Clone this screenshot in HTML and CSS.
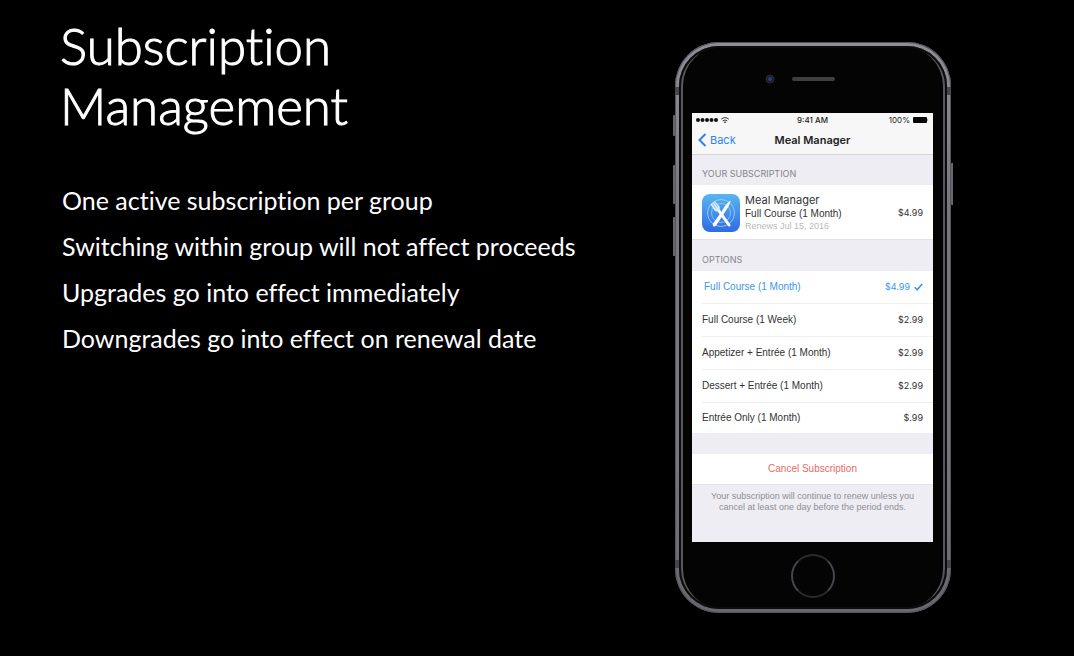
FILE: index.html
```html
<!DOCTYPE html>
<html lang="en">
<head>
<meta charset="utf-8">
<title>Subscription Management</title>
<link rel="stylesheet" href="styles.css">
</head>
<body>
<main class="slide">
  <section class="copy">
    <h1 class="title">Subscription<br>Management</h1>
    <ul class="points">
      <li>One active subscription per group</li>
      <li>Switching within group will not affect proceeds</li>
      <li>Upgrades go into effect immediately</li>
      <li>Downgrades go into effect on renewal date</li>
    </ul>
  </section>

  <section class="phone" aria-label="Phone">
    <span class="key key-mute"></span>
    <span class="key key-up"></span>
    <span class="key key-down"></span>
    <span class="key key-power"></span>
    <span class="band band-top"></span>
    <span class="band band-bottom"></span>
    <div class="face">
      <div class="forehead">
        <svg class="sensors" width="160" height="14" viewBox="0 0 160 14" aria-hidden="true">
          <circle cx="37" cy="7" r="4" fill="#1c1d27" stroke="#2b2b30"/>
          <circle cx="37" cy="7" r="2" fill="#273f80"/>
          <rect x="59" y="5" width="43" height="4" rx="2" fill="#3f3e40"/>
        </svg>
      </div>
      <div class="screen">
        <div class="status">
          <span class="signal">
            <svg width="34" height="8" viewBox="0 0 34 8" aria-hidden="true">
              <g fill="#111"><circle cx="2" cy="4" r="2"/><circle cx="6.500" cy="4" r="2"/><circle cx="11" cy="4" r="2"/><circle cx="15.500" cy="4" r="2"/><circle cx="20" cy="4" r="2"/></g>
              <g fill="none" stroke="#222" stroke-width=".9"><path d="M25.200 3.200Q29 0 32.800 3.200"/><path d="M26.700 4.900Q29 3 31.300 4.900" /></g>
              <path d="M27.800 6L29 7.300 30.200 6Q29 5 27.800 6Z" fill="#222"/>
            </svg>
          </span>
          <span class="clock">9:41 AM</span>
          <span class="power">100%
            <svg width="16" height="6" viewBox="0 0 16 6" aria-hidden="true"><rect width="14" height="6" rx="1" fill="#050505"/><path d="M14.500 1.800q1.400 1.200 0 2.400z" fill="#050505"/></svg>
          </span>
        </div>
        <div class="navbar">
          <button class="back" type="button">
            <svg width="9" height="14" viewBox="0 0 9 14" aria-hidden="true"><path d="M7.500 1L1.500 7l6 6" fill="none" stroke="#2f83f0" stroke-width="2"/></svg>
            Back
          </button>
          <h2 class="heading">Meal Manager</h2>
        </div>
        <h3 class="label">YOUR SUBSCRIPTION</h3>
        <div class="current">
          <svg class="app-icon" width="38" height="38" viewBox="0 0 38 38" aria-hidden="true">
            <defs><linearGradient id="sky" x1="0" y1="0" x2="0" y2="1"><stop offset="0" stop-color="#5ab6ef"/><stop offset="1" stop-color="#2e6be4"/></linearGradient></defs>
            <rect width="38" height="38" rx="8" fill="url(#sky)"/>
            <circle cx="19" cy="19" r="13.500" fill="none" stroke="#a9d3f7" stroke-width=".8"/>
            <circle cx="19" cy="19" r="9.500" fill="none" stroke="#a9d3f7" stroke-width=".7"/>
            <path d="M15 14L27 31" stroke="#fff" stroke-width="3" stroke-linecap="round"/>
            <path d="M8.500 10.500L13 7l4.500 5.500q1 3-1 4.500t-4-.5z" fill="#d9ecfc"/>
            <path d="M10 9.500l4 5M11.800 8l4 5" stroke="#63a9ee" stroke-width=".7"/>
            <path d="M29 6.500Q24 9 20 17L11 29.500q-1 2 .5 2.800t2.800-1L22 19.500Q27 13 29 6.500Z" fill="#fff"/>
          </svg>
          <div class="plan">
            <span class="plan-app">Meal Manager</span>
            <span class="plan-name">Full Course (1 Month)</span>
            <span class="plan-date">Renews Jul 15, 2016</span>
          </div>
          <span class="price">$4.99</span>
        </div>
        <h3 class="label label-options">OPTIONS</h3>
        <div class="options">
          <button class="option option-on" type="button"><span>Full Course (1 Month)</span><span class="price">$4.99
            <svg width="9" height="8" viewBox="0 0 9 8" aria-hidden="true"><path d="M.8 4.300L3.200 6.700 8.200 1" fill="none" stroke="#3290e8" stroke-width="1.600"/></svg></span></button>
          <button class="option" type="button"><span>Full Course (1 Week)</span><span class="price">$2.99</span></button>
          <button class="option" type="button"><span>Appetizer + Entrée (1 Month)</span><span class="price">$2.99</span></button>
          <button class="option" type="button"><span>Dessert + Entrée (1 Month)</span><span class="price">$2.99</span></button>
          <button class="option" type="button"><span>Entrée Only (1 Month)</span><span class="price">$.99</span></button>
        </div>
        <button class="cancel" type="button">Cancel Subscription</button>
        <p class="note">Your subscription will continue to renew unless you cancel at least one day before the period ends.</p>
      </div>
      <div class="chin"><button class="home" type="button" aria-label="Home"></button></div>
    </div>
  </section>
</main>
</body>
</html>
```
FILE: styles.css
```css
* {
  box-sizing: border-box;
}

body {
  margin: 0;
  min-height: 100vh;
  background: #000;
  color: #fff;
  font-family: Inter, "Liberation Sans", sans-serif;
}

button {
  margin: 0;
  padding: 0;
  border: 0;
  background: none;
  color: inherit;
  font: inherit;
}

h1, h2, h3, p, ul {
  margin: 0;
  padding: 0;
  font-weight: inherit;
}

.slide {
  display: grid;
  grid-template-columns: 1fr auto;
  align-items: start;
  padding: 16px 123px 0 60px;
}

.copy {
  font-family: Lato, "Open Sans", sans-serif;
  font-variant-ligatures: none;
}

.title {
  font-size: 51px;
  font-weight: 300;
  line-height: 60px;
  -webkit-text-stroke: 1px #fff;
}

.points {
  margin-top: 41px;
  padding-left: 2px;
  list-style: none;
  font-size: 25px;
  line-height: 46px;
}

/* Device */

.phone {
  position: relative;
  width: 276px;
  margin-top: 26px;
  padding: 4px;
  border-radius: 44px;
  background: linear-gradient(#8e8e96, #77777e 30%, #77777e 70%, #67676d);
  box-shadow: inset 0 0 0 1px #55555a;
}

.face {
  padding: 0 14px 0 13px;
  border-radius: 40px;
  background: #040404;
  box-shadow: inset 0 0 0 2px #0c0c0d, inset 4px 0 #58585c, inset -4px 0 #58585c;
}

.forehead {
  display: flex;
  justify-content: center;
  height: 67px;
  padding-top: 26px;
}

.chin {
  display: flex;
  justify-content: center;
  padding: 12px 0 11px;
}

.home {
  width: 44px;
  height: 44px;
  border: 2px solid;
  border-color: #2a2a31 #45454d;
  border-radius: 50%;
}

.key {
  position: absolute;
  left: -2px;
  width: 2px;
  border-radius: 1px 0 0 1px;
  background: #66666b;
}

.key-mute { top: 73px; height: 21px; }
.key-up { top: 123px; height: 39px; }
.key-down { top: 175px; height: 39px; }
.key-power { top: 121px; right: -2px; left: auto; height: 42px; }

.band {
  position: absolute;
  right: 0;
  left: 0;
  height: 8px;
  border: solid #44464a;
  border-width: 0 4px;
}

.band-top { top: 45px; }
.band-bottom { bottom: 45px; }

/* Screen */

.screen {
  padding-bottom: 29px;
  background: #eeedf3;
  color: #333;
  font-family: "Liberation Sans", sans-serif;
  font-size: 10px;
  line-height: 12px;
}

.status, .navbar, .label, .plan-app, .price {
  font-family: Inter, "Liberation Sans", sans-serif;
}

.status {
  display: grid;
  grid-template-columns: 1fr auto 1fr;
  align-items: center;
  height: 14px;
  padding: 0 4px;
  background: #f7f7f7;
  color: #222;
  font-size: 8px;
}

.signal, .power {
  display: flex;
  align-items: center;
}

.clock {
  font-weight: 500;
}

.power {
  justify-content: flex-end;
  gap: 3px;
}

.navbar {
  display: grid;
  grid-template-columns: 1fr auto 1fr;
  align-items: center;
  height: 28px;
  padding: 0 6px 1px;
  border-bottom: 1px solid #d5d5d8;
  background: #f7f7f7;
}

.back {
  display: flex;
  align-items: center;
  gap: 3px;
  color: #2f83f0;
  font-size: 11px;
}

.heading {
  color: #222;
  font-size: 11px;
  font-weight: 600;
}

.label {
  padding: 13px 10px 5px;
  color: #85858a;
  font-size: 9px;
}

.label-options {
  padding-top: 14px;
}

.current {
  display: flex;
  align-items: center;
  gap: 5px;
  padding: 8px 10px 6px;
  border-bottom: 1px solid #e3e3e6;
  background: #fff;
}

.app-icon {
  flex: none;
}

.plan {
  display: flex;
  flex: 1;
  flex-direction: column;
  line-height: 13px;
}

.plan-app {
  font-size: 11px;
  line-height: 14px;
}

.plan-date {
  color: #b9b9bc;
  font-size: 9px;
}

.price {
  font-size: 9px;
}

.options {
  padding-left: 10px;
  background: #fff;
}

.option {
  display: flex;
  align-items: center;
  justify-content: space-between;
  width: 100%;
  height: 33px;
  padding-right: 10px;
  border-bottom: 1px solid #f0f0f2;
  text-align: left;
}

.option:last-child {
  height: 30px;
  border-bottom: 0;
}

.option-on {
  padding-left: 2px;
  color: #3b95e9;
}

.option-on .price {
  display: flex;
  align-items: center;
  gap: 4px;
}

.cancel {
  width: 100%;
  height: 31px;
  margin-top: 21px;
  border-bottom: 1px solid #e3e3e6;
  background: #fff;
  color: #e56c66;
}

.note {
  padding: 6px 14px 0;
  color: #8e8e93;
  font-size: 9px;
  line-height: 11px;
  text-align: center;
}
```
